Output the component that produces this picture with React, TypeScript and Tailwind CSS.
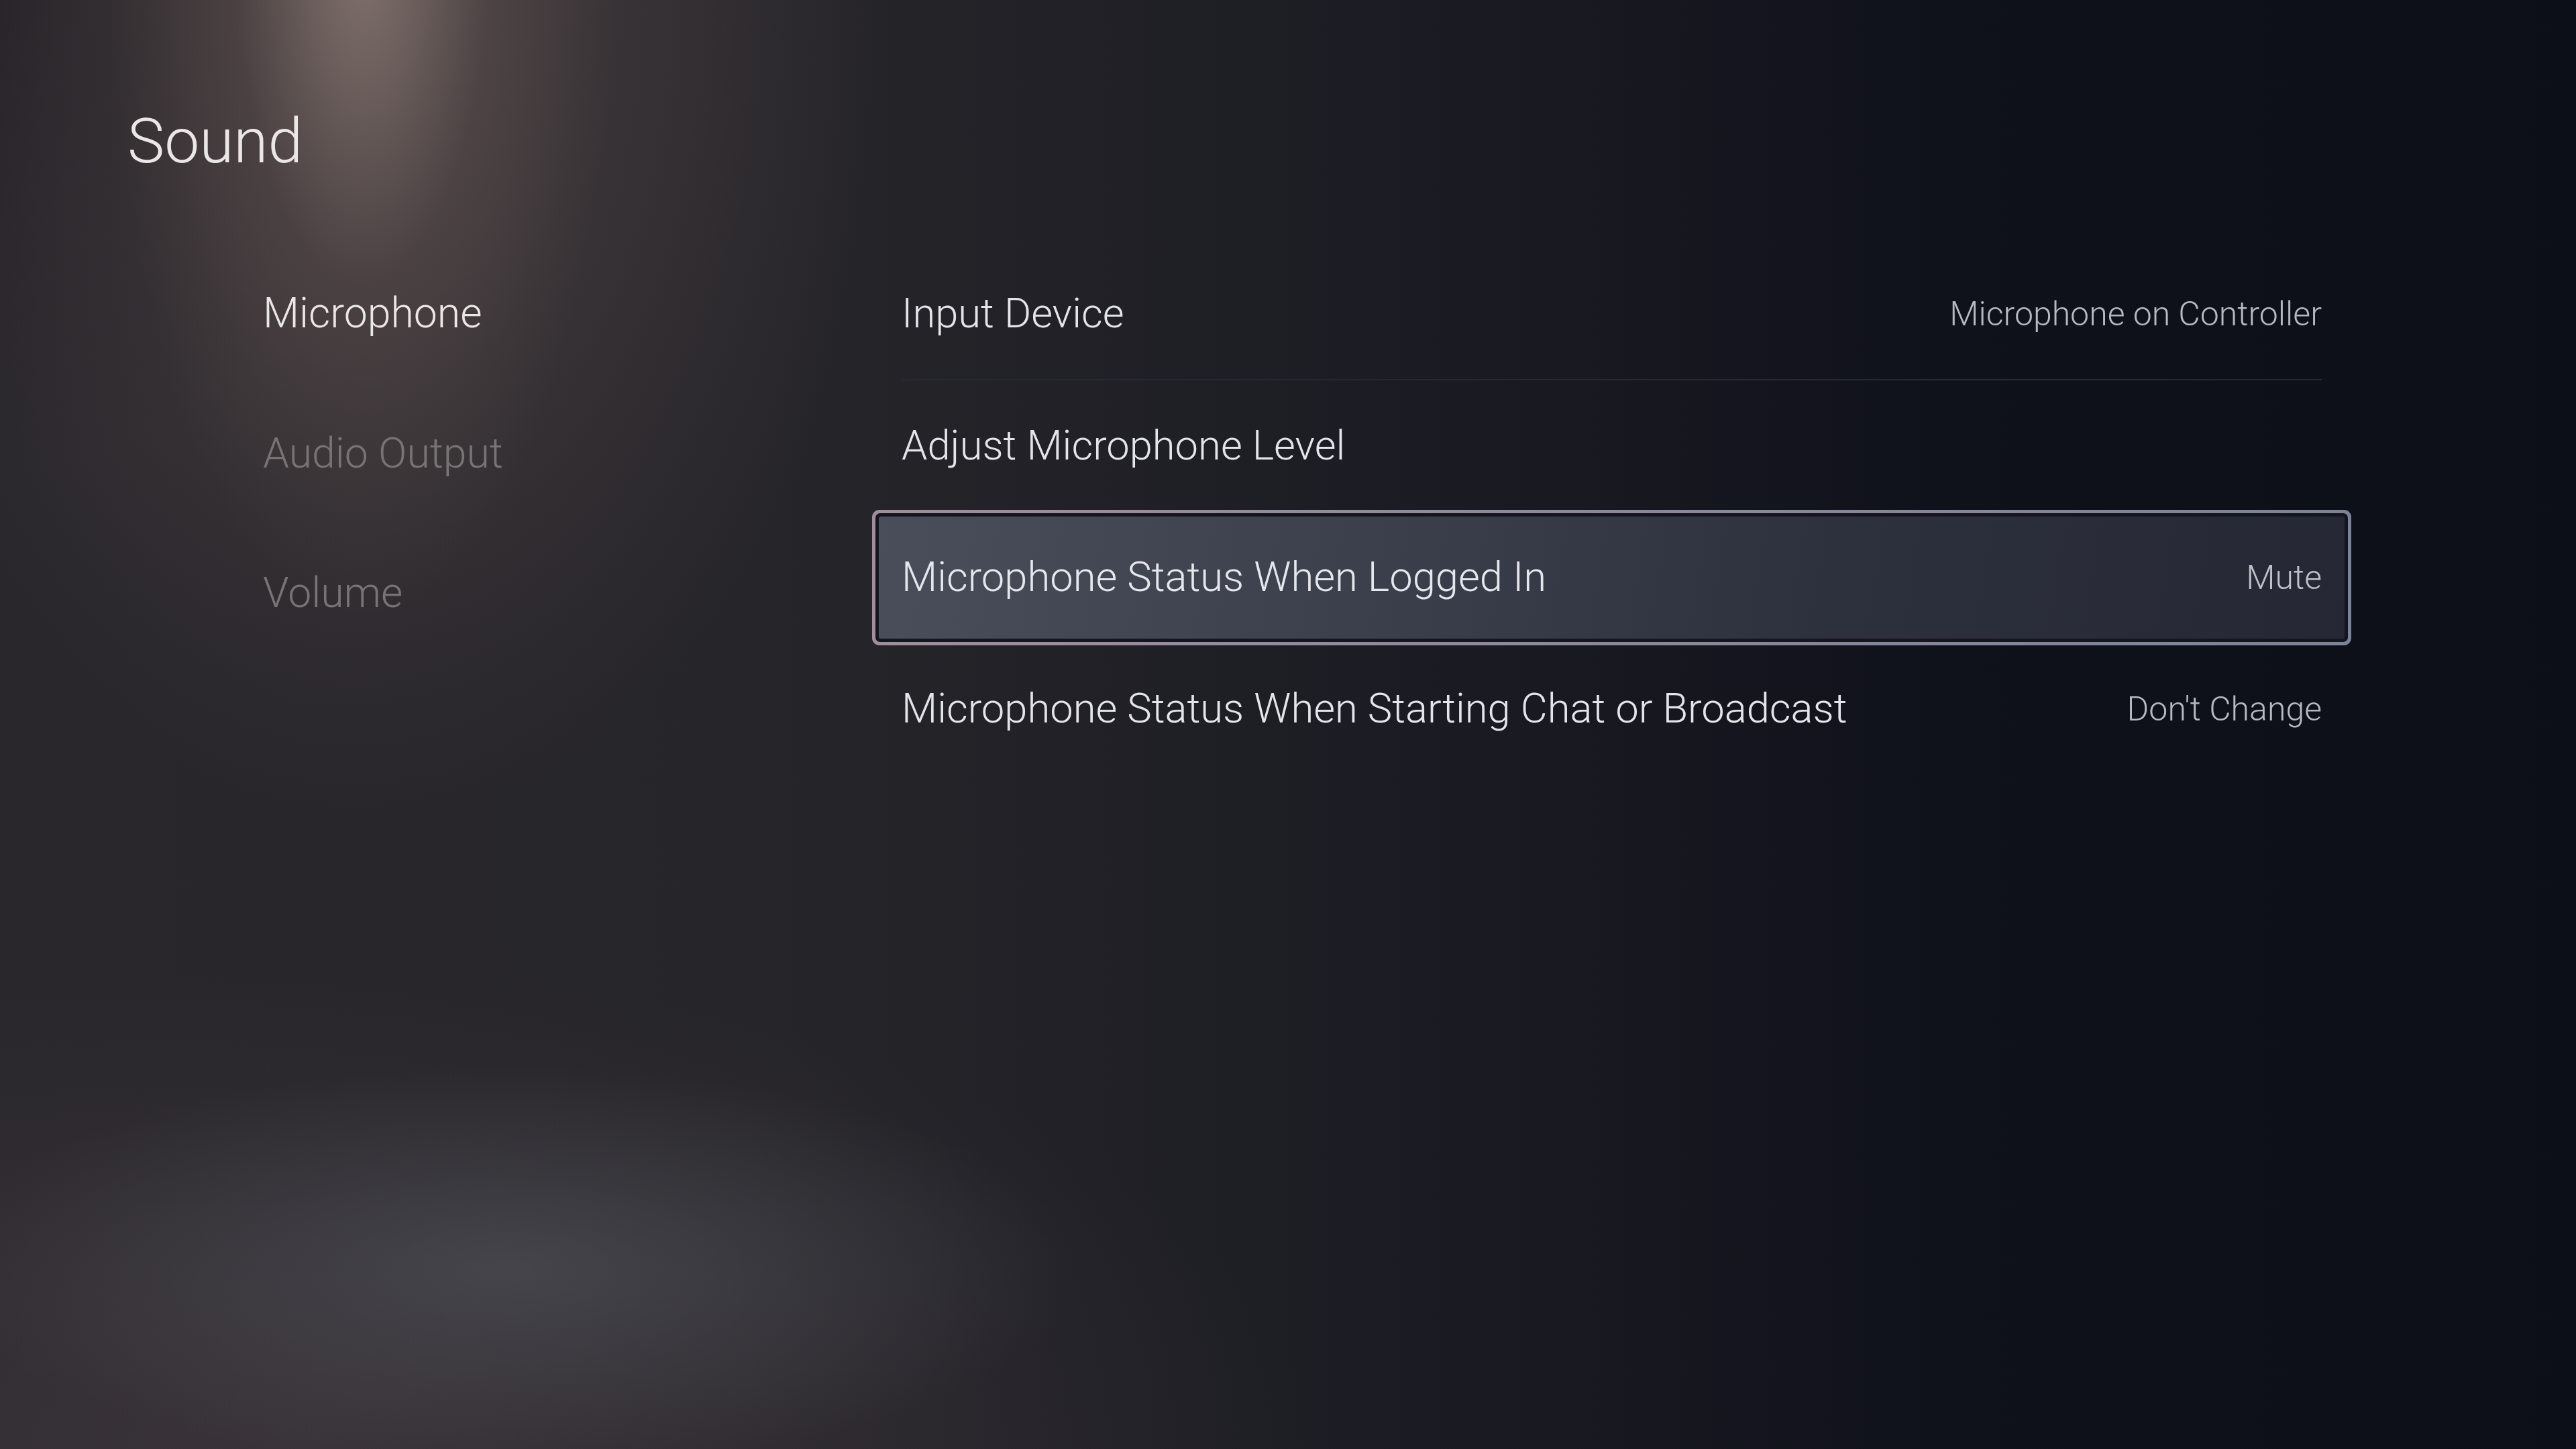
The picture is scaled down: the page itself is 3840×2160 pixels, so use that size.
import React from "react"

type Row = {
  label: string
  value?: string
  selected?: boolean
  divider?: boolean
}

const rows: Row[] = [
  { label: "Input Device", value: "Microphone on Controller", divider: true },
  { label: "Adjust Microphone Level" },
  { label: "Microphone Status When Logged In", value: "Mute", selected: true },
  { label: "Microphone Status When Starting Chat or Broadcast", value: "Don't Change" },
]

const tabs = [
  { label: "Microphone", active: true },
  { label: "Audio Output", active: false },
  { label: "Volume", active: false },
]

const SettingRow = ({ label, value, selected, divider }: Row) => {
  if (selected) {
    return (
      // focus ring: light outline, dark gap, then the card
      <div className="-mx-[44px] -my-[3px] h-[202px] rounded-[11px] p-[5px] bg-gradient-to-r from-[#a08d9e] via-[#8d879c] to-[#7c8299]">
        <div className="h-full rounded-[7px] bg-[#15161d] p-[5px]">
          <div className="flex h-full items-center justify-between rounded-[3px] bg-[linear-gradient(100deg,#4a4e5a_0%,#3b3f4b_35%,#2d313d_65%,#252834_100%)] px-[34px]">
            <span className="text-[61.5px] leading-none text-[#e6e7ec]">{label}</span>
            {value && <span className="text-[50px] leading-none text-[#bfc1c9]">{value}</span>}
          </div>
        </div>
      </div>
    )
  }

  return (
    <div
      className={
        "flex h-[196px] items-center justify-between " +
        (divider ? "border-b-2 border-[#272932]" : "")
      }
    >
      <span className="text-[61.5px] leading-none text-[#e4e5ea]">{label}</span>
      {value && <span className="text-[50px] leading-none text-[#b7b9c1]">{value}</span>}
    </div>
  )
}

const App = () => {
  return (
    <div className="h-[2160px] w-full overflow-hidden font-['Roboto',sans-serif] font-light bg-[image:radial-gradient(ellipse_380px_1000px_at_540px_-80px,rgba(175,155,145,0.55),rgba(120,102,98,0.22)_50%,transparent_100%),radial-gradient(ellipse_1100px_1750px_at_560px_0px,rgba(105,88,86,0.5),transparent_70%),radial-gradient(ellipse_850px_300px_at_760px_1890px,rgba(92,97,104,0.45),transparent_100%),radial-gradient(ellipse_1500px_700px_at_450px_2150px,rgba(72,62,68,0.55),transparent_100%),radial-gradient(ellipse_600px_700px_at_0px_0px,rgba(20,20,26,0.5),transparent_100%),linear-gradient(90deg,#29272c_0%,#26252a_30%,#1b1c23_55%,#10121b_75%,#0d0f18_100%)]">
      {/* title */}
      <h1 className="pl-[190px] pt-[164px] text-[93px] leading-none font-light text-[#ebe7e7]">
        Sound
      </h1>

      <div className="mt-[114px] flex">
        {/* side tabs */}
        <nav className="ml-[392px] flex w-[952px] flex-col gap-[146px] pt-[65px]">
          {tabs.map((t) => (
            <div
              key={t.label}
              className={
                "text-[62.5px] leading-none " +
                (t.active ? "text-[#ebe7e7]" : "text-[#787374]")
              }
            >
              {t.label}
            </div>
          ))}
        </nav>

        {/* settings list */}
        <div className="flex w-[2117px] flex-col">
          {rows.map((r) => (
            <SettingRow key={r.label} {...r} />
          ))}
        </div>
      </div>
    </div>
  )
}

export default App
